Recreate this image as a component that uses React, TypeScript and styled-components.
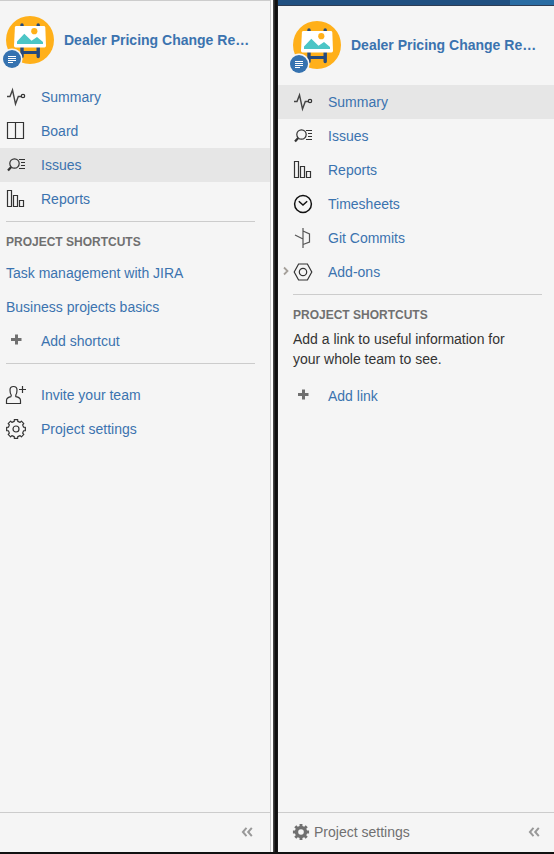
import React from "react";
import styled, { createGlobalStyle, css } from "styled-components";

const GlobalStyle = createGlobalStyle`
  *, *::before, *::after { box-sizing: border-box; }
  body {
    margin: 0;
    background: #f5f5f5;
    font-family: "Liberation Sans", Arial, sans-serif;
    font-size: 14px;
    line-height: 20px;
    color: #333;
  }
`;

const Screens = styled.div`
  display: grid;
  grid-template-columns: 271fr 7px 276fr;
  min-height: 100vh;
  border-bottom: 2px solid #111;
`;

const Divider = styled.div`
  border-left: 2px solid #fff;
  background: linear-gradient(to right, #444 1px, #101010 2px, #101010 4px, #222 5px);
`;

const Sidebar = styled.aside<{ $edge?: boolean }>`
  display: flex;
  flex-direction: column;
  min-width: 0;
  background: #f5f5f5;
  ${(p) =>
    p.$edge &&
    css`
      border-top: 1px solid #ccc;
      border-right: 1px solid #ccc;
    `}
`;

const TopBar = styled.div`
  display: flex;
  flex: none;
  height: 6px;
  background: #205081;
  border-bottom: 1px solid #2e3d54;
`;

const TopBarAction = styled.div`
  width: 44px;
  margin-left: auto;
  background: #296ca3;
`;

const Header = styled.header<{ $inset: number }>`
  display: flex;
  align-items: center;
  gap: 10px;
  height: 79px;
  padding: 0 16px 2px ${(p) => p.$inset}px;
`;

const ProjectLink = styled.a`
  overflow: hidden;
  color: #3b73af;
  font-weight: bold;
  text-decoration: none;
  text-overflow: ellipsis;
  white-space: nowrap;
`;

const AvatarSvg = styled.svg`
  flex: none;
  width: 48px;
  height: 48px;
  overflow: visible;
`;

const List = styled.ul`
  margin: 0;
  padding: 0;
  list-style: none;
`;

const ItemLink = styled.a<{ $inset: number; $active?: boolean }>`
  position: relative;
  display: flex;
  align-items: center;
  gap: 15px;
  height: 34px;
  padding: 0 12px 0 ${(p) => p.$inset}px;
  color: #3b73af;
  text-decoration: none;
  background: ${(p) => (p.$active ? "#e6e6e6" : "transparent")};
`;

const Expander = styled.svg`
  position: absolute;
  left: 5px;
  width: 6px;
  height: 12px;
  fill: none;
  stroke: #a5a09a;
  stroke-width: 1.8;
`;

const IconSvg = styled.svg`
  flex: none;
  width: 20px;
  height: 20px;
  overflow: visible;
  fill: none;
  stroke: #333;
  stroke-width: 1.2;
`;

const Section = styled.section<{ $inset: number; $end: number }>`
  &::before {
    content: "";
    display: block;
    height: 1px;
    margin: 5px ${(p) => p.$end}px 0 ${(p) => p.$inset}px;
    background: #ccc;
  }
`;

const Heading = styled.h2<{ $inset: number }>`
  margin: 0;
  padding: 10px 12px 4px ${(p) => p.$inset}px;
  color: #707070;
  font-size: 12px;
  font-weight: bold;
  line-height: 20px;
  text-transform: uppercase;
`;

const Hint = styled.p<{ $inset: number }>`
  max-width: 250px;
  margin: 0 0 10px;
  padding: 0 12px 0 ${(p) => p.$inset}px;
`;

const TeamList = styled(List)`
  padding-top: 14px;
`;

const Footer = styled.footer<{ $end: number }>`
  display: flex;
  align-items: center;
  height: 40px;
  margin-top: auto;
  padding: 0 ${(p) => p.$end}px 2px 14px;
  border-top: 1px solid #ccc;
`;

const SettingsLink = styled.a`
  display: flex;
  align-items: center;
  gap: 4px;
  color: #707070;
  text-decoration: none;
`;

const CollapseButton = styled.button`
  display: flex;
  margin-left: auto;
  padding: 0;
  border: 0;
  background: none;
  cursor: pointer;

  svg {
    width: 12px;
    height: 12px;
    fill: none;
    stroke: #999;
    stroke-width: 2;
  }
`;

function gearPath(teeth: number, outer: number, inner: number, c: number) {
  const step = (Math.PI * 2) / teeth;
  const points: string[] = [];
  for (let i = 0; i < teeth; i++) {
    const mid = i * step - Math.PI / 2;
    const corners: [number, number][] = [
      [-0.29, inner],
      [-0.23, outer],
      [0.23, outer],
      [0.29, inner],
    ];
    corners.forEach(([t, r]) => {
      const a = mid + t * step;
      points.push(`${(c + Math.cos(a) * r).toFixed(2)} ${(c + Math.sin(a) * r).toFixed(2)}`);
    });
  }
  return `M${points.join("L")}Z`;
}

const icons = {
  summary: (
    <>
      <path d="M1 9.5H4L6.5 3L9.5 17L12.3 9.5H15.2" stroke="#444" strokeWidth="1.4" />
      <circle cx="17" cy="9" r="1.7" />
    </>
  ),
  board: <path d="M1.5 1.5H17.5V17.5H1.5ZM9.5 1.5V17.5" />,
  issues: (
    <>
      <circle cx="8.5" cy="8.5" r="4.7" />
      <path d="M5.2 12L2 15.6" strokeWidth="2.2" />
      <path d="M13 4.5H19M15 7.5H19M15 10.5H19M13 13.5H19" strokeWidth="1" />
    </>
  ),
  reports: <path d="M1.5 1.5H5.5V17.5H1.5ZM7.5 6.5H11.5V17.5H7.5ZM13.5 11.5H17.5V17.5H13.5Z" />,
  timesheets: (
    <g stroke="#111" strokeWidth="1.5">
      <circle cx="10" cy="10" r="8.4" />
      <path d="M5.8 7.3L10 11L14.2 7.3" />
    </g>
  ),
  commits: <path d="M10 0V20M2 7L10 11M10 3L16.5 6V14L10 16.5" stroke="#555" />,
  addons: (
    <>
      <path d="M1.2 10L5.6 2H14.4L18.8 10L14.4 18H5.6Z" />
      <circle cx="10" cy="10" r="3.7" />
    </>
  ),
  plus: <path d="M5 8.5H15.5M10.5 3.5V13.5" stroke="#707070" strokeWidth="3" />,
  invite: (
    <>
      <path d="M5.2 11.6V10C4.3 8.8 4 7 4 5C4 2.8 5.4 1.5 7.5 1.5C9.6 1.5 11 2.8 11 5C11 7 10.7 8.8 9.8 10V11.6C12.6 12 14.5 13 14.5 15.5V18.5H0.5V15.5C0.5 13 2.4 12 5.2 11.6" />
      <path d="M13 4.5H20M16.5 1V8" />
    </>
  ),
  settings: (
    <>
      <path d={gearPath(8, 9.5, 7.8, 10)} strokeLinejoin="round" />
      <circle cx="10" cy="10" r="3" />
    </>
  ),
};

type IconName = keyof typeof icons;

interface Item {
  label: string;
  icon?: IconName;
  active?: boolean;
  expandable?: boolean;
}

const leftNav: Item[] = [
  { label: "Summary", icon: "summary" },
  { label: "Board", icon: "board" },
  { label: "Issues", icon: "issues", active: true },
  { label: "Reports", icon: "reports" },
];

const leftShortcuts: Item[] = [
  { label: "Task management with JIRA" },
  { label: "Business projects basics" },
  { label: "Add shortcut", icon: "plus" },
];

const teamItems: Item[] = [
  { label: "Invite your team", icon: "invite" },
  { label: "Project settings", icon: "settings" },
];

const rightNav: Item[] = [
  { label: "Summary", icon: "summary", active: true },
  { label: "Issues", icon: "issues" },
  { label: "Reports", icon: "reports" },
  { label: "Timesheets", icon: "timesheets" },
  { label: "Git Commits", icon: "commits" },
  { label: "Add-ons", icon: "addons", expandable: true },
];

function NavItems({ items, inset }: { items: Item[]; inset: number }) {
  return (
    <>
      {items.map((item) => (
        <li key={item.label}>
          <ItemLink href="#" $inset={inset} $active={item.active} aria-current={item.active ? "page" : undefined}>
            {item.expandable && (
              <Expander viewBox="0 0 6 12" aria-hidden="true">
                <path d="M1 1.5L4.5 5L1 8.5" />
              </Expander>
            )}
            {item.icon && (
              <IconSvg viewBox="0 0 20 20" aria-hidden="true">
                {icons[item.icon]}
              </IconSvg>
            )}
            {item.label}
          </ItemLink>
        </li>
      ))}
    </>
  );
}

function ProjectHeader({ inset }: { inset: number }) {
  return (
    <Header $inset={inset}>
      <AvatarSvg viewBox="0 0 48 48" aria-hidden="true">
        <circle cx="24" cy="24" r="24" fill="#ffb01a" />
        <path d="M16 9V40.5M32.2 9V40.5" stroke="#254a7c" strokeWidth="3.4" strokeLinecap="round" />
        <path d="M16 36.5H32" stroke="#254a7c" strokeWidth="3" />
        <path
          d="M10.4 10H37.8Q39.2 10 39.3 11.4L40 29.8Q40 31.5 38.5 31.5H9.5Q8 31.5 8 29.8L8.9 11.4Q9 10 10.4 10Z"
          fill="#fff"
        />
        <circle cx="28.3" cy="15.2" r="3.1" fill="#ffb01a" />
        <path d="M11 28V25.5L18.3 17.8L25.5 24.8L31 21L37 26V28Z" fill="#4bc5c6" />
        <circle cx="6" cy="43" r="10.6" fill="#f5f5f5" />
        <circle cx="6" cy="43" r="9" fill="#3572b0" />
        <path d="M2 40.5H10M2 42.5H10M2 44.5H10M2 46.5H7" stroke="#fff" strokeWidth="1" />
      </AvatarSvg>
      <ProjectLink href="#">Dealer Pricing Change Re…</ProjectLink>
    </Header>
  );
}

function Collapse() {
  return (
    <CollapseButton type="button" aria-label="Collapse sidebar">
      <svg viewBox="0 0 12 12" aria-hidden="true">
        <path d="M5.5 1.8L1.9 6L5.5 10.2M10.8 1.8L7.2 6L10.8 10.2" />
      </svg>
    </CollapseButton>
  );
}

export default function App() {
  return (
    <>
      <GlobalStyle />
      <Screens>
        <Sidebar $edge>
          <ProjectHeader inset={6} />
          <nav aria-label="Project">
            <List>
              <NavItems items={leftNav} inset={6} />
            </List>
          </nav>
          <Section $inset={6} $end={15}>
            <Heading $inset={6}>Project shortcuts</Heading>
            <List>
              <NavItems items={leftShortcuts} inset={6} />
            </List>
          </Section>
          <Section $inset={6} $end={15}>
            <TeamList>
              <NavItems items={teamItems} inset={6} />
            </TeamList>
          </Section>
          <Footer $end={17}>
            <Collapse />
          </Footer>
        </Sidebar>
        <Divider />
        <Sidebar>
          <TopBar>
            <TopBarAction />
          </TopBar>
          <ProjectHeader inset={15} />
          <nav aria-label="Project">
            <List>
              <NavItems items={rightNav} inset={15} />
            </List>
          </nav>
          <Section $inset={15} $end={12}>
            <Heading $inset={15}>Project shortcuts</Heading>
            <Hint $inset={15}>Add a link to useful information for your whole team to see.</Hint>
            <List>
              <NavItems items={[{ label: "Add link", icon: "plus" }]} inset={15} />
            </List>
          </Section>
          <Footer $end={14}>
            <SettingsLink href="#">
              <svg width="18" height="18" viewBox="0 0 18 18" aria-hidden="true">
                <path d={gearPath(8, 8.2, 6.2, 9)} fill="#707070" />
                <circle cx="9" cy="9" r="2.8" fill="#f5f5f5" />
              </svg>
              Project settings
            </SettingsLink>
            <Collapse />
          </Footer>
        </Sidebar>
      </Screens>
    </>
  );
}
